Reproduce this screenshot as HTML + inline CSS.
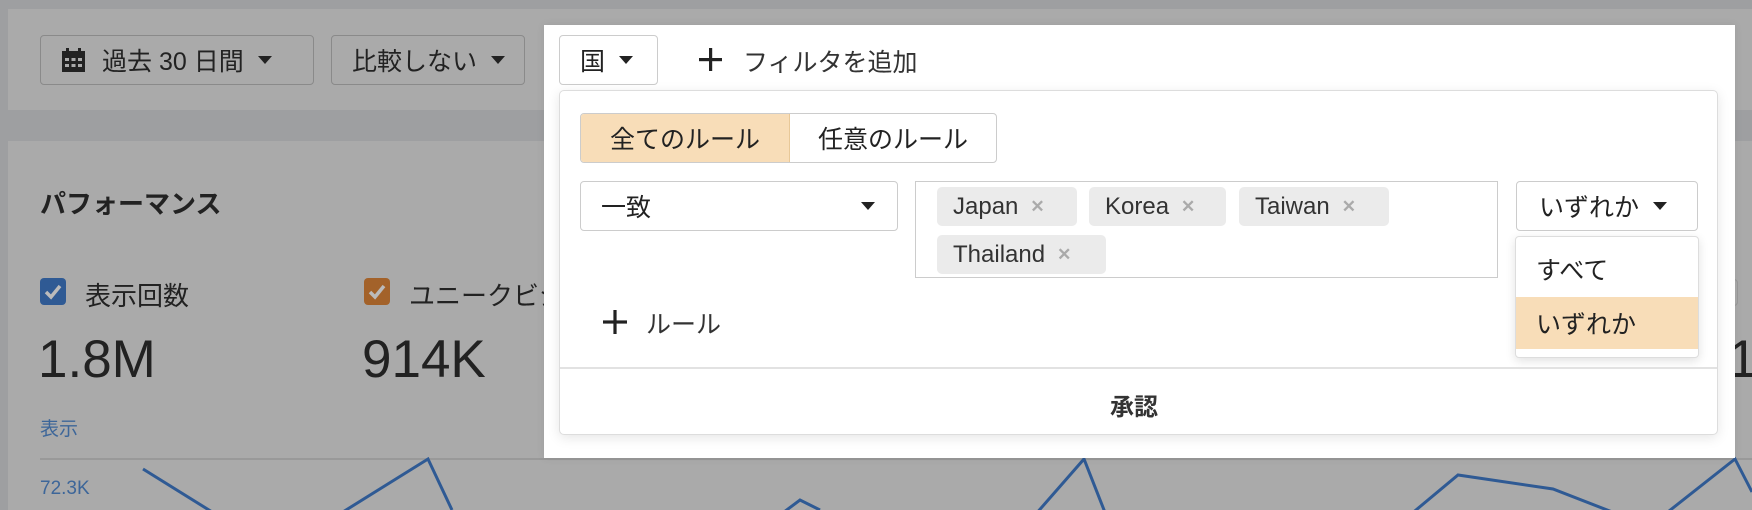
<!DOCTYPE html>
<html><head><meta charset="utf-8"><style>
*{box-sizing:border-box;margin:0;padding:0}
body{width:1752px;height:510px;overflow:hidden;background:#9e9fa1;position:relative;font-family:"Liberation Sans","Noto Sans CJK JP",sans-serif;color:#222}
.a{position:absolute}
.btn{position:absolute;border:1.5px solid #8a8a8a;border-radius:4px;font-size:25px;display:flex;align-items:center;padding-left:20px;color:#222}
.tri{display:inline-block;width:0;height:0;border-left:7px solid transparent;border-right:7px solid transparent;border-top:8px solid #222;margin-left:14px}
.tag{position:absolute;background:#ebebeb;border-radius:5px;height:39px;font-size:24px;display:flex;align-items:center;padding-left:16px;color:#333}
.tag span{color:#aaa;font-size:17px;margin-left:12px;font-weight:bold}
.cb{position:absolute;width:26px;height:27px;border-radius:4px}
</style></head><body>
<div class="a" style="left:8px;top:9px;width:1744px;height:101px;background:#aaaaaa"></div>
<div class="a" style="left:8px;top:141px;width:1744px;height:369px;background:#aaaaaa"></div>

<div class="btn" style="left:40px;top:35px;width:274px;height:50px">
<svg width="25" height="25" viewBox="0 0 25 25" style="margin-right:16px"><rect x="1" y="3" width="23" height="21" fill="#222"/><rect x="5" y="0" width="3" height="5" fill="#222"/><rect x="17" y="0" width="3" height="5" fill="#222"/><g fill="#aaa"><rect x="4" y="10" width="4" height="3"/><rect x="10.5" y="10" width="4" height="3"/><rect x="17" y="10" width="4" height="3"/><rect x="4" y="16" width="4" height="3"/><rect x="10.5" y="16" width="4" height="3"/><rect x="17" y="16" width="4" height="3"/></g></svg>過去 30 日間<i class="tri"></i></div>
<div class="btn" style="left:331px;top:35px;width:194px;height:50px">比較しない<i class="tri"></i></div>

<div class="a" style="left:40px;top:184px;font-size:26px;font-weight:bold">パフォーマンス</div>
<div class="cb" style="left:40px;top:278px;background:#2f5a94"><svg width="26" height="27"><polyline points="6,14 11,19 20,8" fill="none" stroke="#bbb" stroke-width="3.5"/></svg></div>
<div class="a" style="left:85px;top:276px;font-size:26px">表示回数</div>
<div class="cb" style="left:364px;top:278px;background:#a3622a"><svg width="26" height="27"><polyline points="6,14 11,19 20,8" fill="none" stroke="#bbb" stroke-width="3.5"/></svg></div>
<div class="a" style="left:409px;top:276px;font-size:26px">ユニークビジ</div>
<div class="a" style="left:38px;top:329px;font-size:53px">1.8M</div>
<div class="a" style="left:362px;top:329px;font-size:53px">914K</div>
<div class="a" style="left:1728px;top:329px;font-size:53px">14</div>
<div class="a" style="left:1700px;top:279px;width:38px;height:27px;border:1.5px solid #999;border-radius:4px"></div>
<div class="a" style="left:40px;top:414px;font-size:19px;color:#3d6699">表示</div>
<div class="a" style="left:40px;top:458px;width:1712px;height:2px;background:#999"></div>
<div class="a" style="left:40px;top:478px;font-size:19px;color:#3d6699">72.3K</div>
<svg class="a" style="left:0;top:0" width="1752" height="510"><polyline fill="none" stroke="#2f5a94" stroke-width="3" points="143,469 225,520 330,520 428,459 452,510"/><polyline fill="none" stroke="#2f5a94" stroke-width="3" points="780,515 800,500 820,510"/><polyline fill="none" stroke="#2f5a94" stroke-width="3" points="1035,515 1084,459 1106,515"/><polyline fill="none" stroke="#2f5a94" stroke-width="3" points="1410,515 1458,475 1553,489 1620,515"/><polyline fill="none" stroke="#2f5a94" stroke-width="3" points="1664,515 1735,459 1752,492"/></svg>

<div class="a" style="left:544px;top:25px;width:1191px;height:433px;background:#fff;box-shadow:0 0 8px rgba(0,0,0,.08)"></div>
<div class="btn" style="left:559px;top:35px;width:99px;height:50px;border-color:#ccc">国<i class="tri"></i></div>
<svg class="a" style="left:699px;top:48px" width="23" height="23"><rect x="10" y="0" width="3.2" height="23" fill="#222"/><rect x="0" y="10" width="23" height="3.2" fill="#222"/></svg>
<div class="a" style="left:743px;top:43px;font-size:25px;color:#333">フィルタを追加</div>

<div class="a" style="left:559px;top:90px;width:1159px;height:345px;border:1.5px solid #ddd;border-radius:5px;box-shadow:0 3px 12px rgba(0,0,0,.1);background:#fff"></div>
<div class="a" style="left:580px;top:113px;width:417px;height:50px;border:1.5px solid #ccc;border-radius:4px;display:flex;font-size:25px;overflow:hidden">
<div style="width:209px;background:#f8ddb8;border-right:1.5px solid #e8c898;display:flex;align-items:center;justify-content:center">全てのルール</div>
<div style="flex:1;display:flex;align-items:center;justify-content:center">任意のルール</div></div>
<div class="a" style="left:580px;top:181px;width:318px;height:50px;border:1.5px solid #ccc;border-radius:4px;font-size:25px;display:flex;align-items:center;padding-left:20px">一致<i class="tri" style="position:absolute;right:22px"></i></div>
<div class="a" style="left:915px;top:181px;width:583px;height:97px;border:1.5px solid #ccc"></div>
<div class="tag" style="left:937px;top:187px;width:140px">Japan<span>✕</span></div>
<div class="tag" style="left:1089px;top:187px;width:137px">Korea<span>✕</span></div>
<div class="tag" style="left:1239px;top:187px;width:150px">Taiwan<span>✕</span></div>
<div class="tag" style="left:937px;top:235px;width:169px">Thailand<span>✕</span></div>
<div class="a" style="left:1516px;top:181px;width:182px;height:50px;border:1.5px solid #ccc;border-radius:4px;font-size:25px;display:flex;align-items:center;padding-left:22px">いずれか<i class="tri"></i></div>
<div class="a" style="left:1515px;top:236px;width:184px;height:122px;border:1.5px solid #ddd;border-radius:4px;background:#fff;box-shadow:0 3px 10px rgba(0,0,0,.12);overflow:hidden">
<div style="height:60px;font-size:25px;padding:14px 0 0 20px">すべて</div>
<div style="height:52px;background:#f8ddb8;font-size:25px;padding:8px 0 0 20px">いずれか</div></div>
<svg class="a" style="left:603px;top:310px" width="24" height="24"><rect x="10.4" y="0" width="3.2" height="24" fill="#222"/><rect x="0" y="10.4" width="24" height="3.2" fill="#222"/></svg>
<div class="a" style="left:646px;top:305px;font-size:25px;color:#333">ルール</div>
<div class="a" style="left:560px;top:367px;width:1157px;height:1.5px;background:#e2e2e2"></div>
<div class="a" style="left:1110px;top:387px;font-size:24px;font-weight:bold;color:#333">承認</div>
</body></html>
